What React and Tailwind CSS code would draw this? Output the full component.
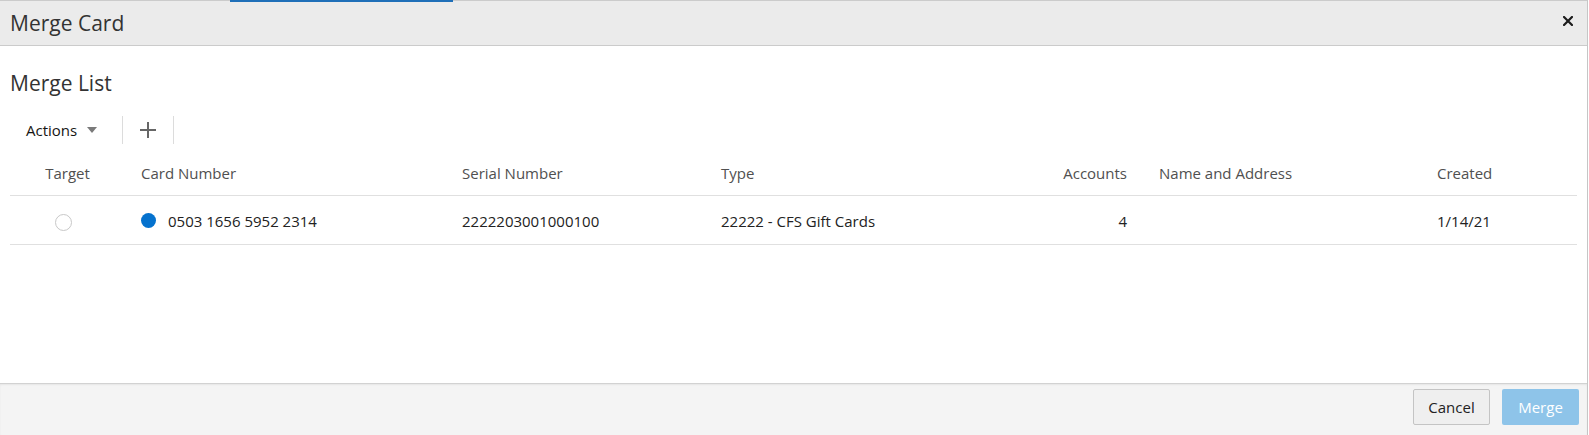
import React from 'react';

const columns = [
  { key: 'target', label: 'Target', width: 'w-[115px]', align: 'text-center' },
  { key: 'card', label: 'Card Number', width: 'w-[321px]', align: 'text-left' },
  { key: 'serial', label: 'Serial Number', width: 'w-[259px]', align: 'text-left' },
  { key: 'type', label: 'Type', width: 'w-[295px]', align: 'text-left' },
  { key: 'accounts', label: 'Accounts', width: 'w-[143px]', align: 'text-right' },
  { key: 'name', label: 'Name and Address', width: 'w-[278px]', align: 'text-left' },
  { key: 'created', label: 'Created', width: 'w-[156px]', align: 'text-left' },
];

const rows = [
  {
    card: '0503 1656 5952 2314',
    serial: '2222203001000100',
    type: '22222 - CFS Gift Cards',
    accounts: '4',
    name: '',
    created: '1/14/21',
  },
];

const App = () => {
  return (
    <div
      className="relative w-[1588px] h-[435px] flex flex-col border-r border-[#c6c6c6] bg-white text-[#222]"
      style={{ fontFamily: '"Open Sans", "Noto Sans", sans-serif' }}
    >
      {/* tab indicator from the page underneath */}
      <div className="absolute top-0 left-[230px] w-[223px] h-[2px] bg-[#1f6fb8]" />

      <div className="h-[46px] shrink-0 flex items-center justify-between bg-[#ebebeb] border-t border-b border-[#cbcbcb] pl-[10px] pr-[12px]">
        <h1 className="text-[21px] text-[#333] leading-none">Merge Card</h1>
        <button className="w-[14px] h-[14px] flex items-center justify-center -mt-[5px]">
          <svg width="10" height="10" viewBox="0 0 10 10">
            <path d="M1 1L9 9M9 1L1 9" stroke="#1c1c1c" strokeWidth="2.2" strokeLinecap="square" />
          </svg>
        </button>
      </div>

      <div className="flex-1 flex flex-col px-[10px] pt-[23px]">
        <h2 className="text-[21px] text-[#333] leading-[28px]">Merge List</h2>

        <div className="mt-[17px] h-[32px] flex items-center">
          <button className="flex items-center gap-[10px] pl-[16px] pr-[25px] text-[15px] text-[#161513]">
            Actions
            <svg width="10" height="6" viewBox="0 0 10 6">
              <path d="M0 0H10L5 6Z" fill="#7a7a7a" />
            </svg>
          </button>
          <div className="w-px h-[28px] bg-[#dcdcdc]" />
          <button className="w-[50px] h-[32px] flex items-center justify-center">
            <svg width="18" height="18" viewBox="0 0 18 18">
              <path d="M9 1V17M1 9H17" stroke="#666" strokeWidth="2" />
            </svg>
          </button>
          <div className="w-px h-[28px] bg-[#dcdcdc]" />
        </div>

        <table className="mt-[7px] w-[1567px] table-fixed border-collapse text-[15px]">
          <thead>
            <tr className="border-b border-[#e0e0e0]">
              {columns.map((col) => (
                <th
                  key={col.key}
                  className={`${col.width} ${col.align} h-[42px] px-[16px] pb-[2px] font-normal text-[#505050]`}
                >
                  {col.label}
                </th>
              ))}
            </tr>
          </thead>
          <tbody>
            {rows.map((row, index) => (
              <tr key={index} className="border-b border-[#e0e0e0]">
                <td className="h-[49px] pt-[2px] text-center">
                  <span className="inline-block w-[17px] h-[17px] rounded-full border border-[#c8c8c8] bg-white align-middle -ml-[8px]" />
                </td>
                <td className="px-[16px] pt-[4px]">
                  <div className="flex items-center gap-[12px]">
                    <span className="w-[15px] h-[15px] rounded-full bg-[#0572ce] -mt-[3px]" />
                    <span>{row.card}</span>
                  </div>
                </td>
                <td className="px-[16px] pt-[4px]">{row.serial}</td>
                <td className="px-[16px] pt-[4px]">{row.type}</td>
                <td className="px-[16px] pt-[4px] text-right">{row.accounts}</td>
                <td className="px-[16px] pt-[4px]">{row.name}</td>
                <td className="px-[16px] pt-[4px]">{row.created}</td>
              </tr>
            ))}
          </tbody>
        </table>
      </div>

      <div className="h-[52px] shrink-0 flex items-start justify-end gap-[12px] bg-[#f4f4f4] border-t border-[#d2d2d2] pt-[5px] pr-[8px] shadow-[inset_0_1px_2px_rgba(0,0,0,0.06)]">
        <button className="w-[77px] h-[36px] rounded-[2px] border border-[#c4c4c4] bg-[#efefef] text-[15px] text-[#222]">
          Cancel
        </button>
        <button className="w-[77px] h-[36px] rounded-[2px] bg-[#8ec4e9] text-[15px] text-white">
          Merge
        </button>
      </div>
    </div>
  );
};

export default App;
